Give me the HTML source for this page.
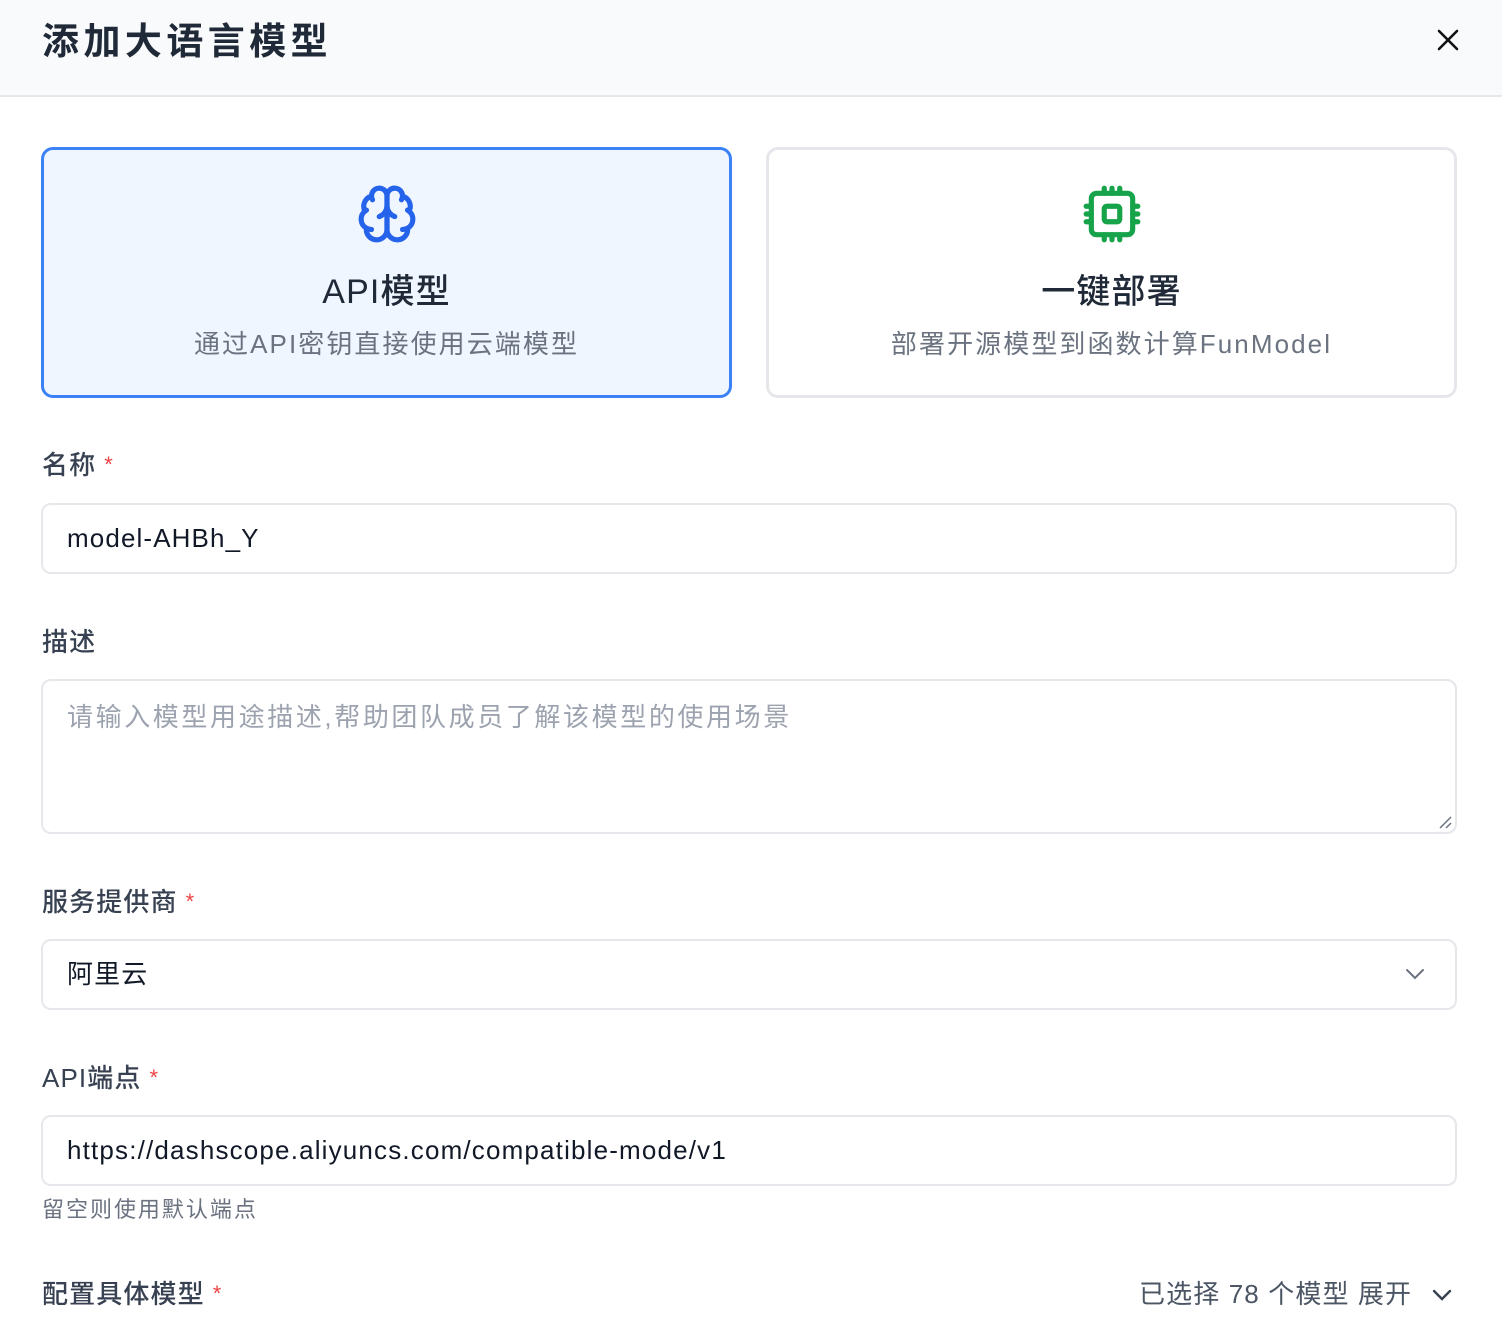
<!DOCTYPE html>
<html><head><meta charset="utf-8">
<style>
*{box-sizing:border-box;margin:0;padding:0}
body{width:1502px;height:1340px;background:#fff;font-family:"Liberation Sans","Noto Sans CJK SC",sans-serif;color:#111827;overflow:hidden;position:relative;letter-spacing:0.07em}
.hdr{position:absolute;left:0;top:0;width:1502px;height:97px;background:#f9fafb;border-bottom:2px solid #e5e7eb}
.hdr h1{position:absolute;left:42px;top:16px;font-size:37px;font-weight:700;line-height:52px;color:#1f2937;letter-spacing:0.12em}
.close{position:absolute;left:1436px;top:28px}
.card{position:absolute;top:147px;width:691px;height:251px;border-radius:12px;text-align:center}
.c1{left:41px;border:3px solid #3b82f6;background:#eff6ff}
.c2{left:766px;border:3px solid #e5e7eb;background:#fff}
.card svg{position:absolute;left:50%;margin-left:-31px;top:33px}
.card .t{position:absolute;left:0;right:0;top:120px;font-size:34px;font-weight:500;line-height:44px;color:#1f2937}
.card .s{position:absolute;left:0;right:0;top:176px;font-size:26px;line-height:36px;color:#6b7280;letter-spacing:0.08em}
.lbl{position:absolute;left:42px;font-size:26px;font-weight:500;line-height:36px;color:#374151}
.lbl b{color:#ef4444;font-weight:400;margin-left:8px;font-size:22px;vertical-align:top}
.inp{position:absolute;left:41px;width:1416px;height:71px;border:2px solid #e5e7eb;border-radius:10px;font-size:26px;line-height:67px;padding-left:24px;color:#111827}
.hint{position:absolute;left:42px;top:1195px;font-size:22px;line-height:30px;color:#6b7280;letter-spacing:0.09em}
</style></head><body>
<div class="hdr"><h1>添加大语言模型</h1>
<svg class="close" width="24" height="24" viewBox="0 0 24 24" fill="none" stroke="#111" stroke-width="2.6" stroke-linecap="round"><path d="M3 3L21 21M21 3L3 21"/></svg></div>

<div class="card c1">
<svg width="62" height="62" viewBox="0 0 24 24" fill="none" stroke="#2563eb" stroke-width="2" stroke-linecap="round" stroke-linejoin="round"><path d="M12 5a3 3 0 1 0-5.997.125 4 4 0 0 0-2.526 5.77 4 4 0 0 0 .556 6.588A4 4 0 1 0 12 18Z"/><path d="M12 5a3 3 0 1 1 5.997.125 4 4 0 0 1 2.526 5.77 4 4 0 0 1-.556 6.588A4 4 0 1 1 12 18Z"/><path d="M15 13a4.5 4.5 0 0 1-3-4 4.5 4.5 0 0 1-3 4"/><path d="M17.599 6.5a3 3 0 0 0 .399-1.375"/><path d="M6.003 5.125A3 3 0 0 0 6.401 6.5"/><path d="M3.477 10.896a4 4 0 0 1 .585-.396"/><path d="M19.938 10.5a4 4 0 0 1 .585.396"/><path d="M6 18a4 4 0 0 1-1.967-.516"/><path d="M19.967 17.484A4 4 0 0 1 18 18"/></svg>
<div class="t">API模型</div><div class="s">通过API密钥直接使用云端模型</div></div>

<div class="card c2">
<svg width="62" height="62" viewBox="0 0 24 24" fill="none" stroke="#16a34a" stroke-width="2" stroke-linecap="round" stroke-linejoin="round"><rect x="4" y="4" width="16" height="16" rx="2"/><rect x="9" y="9" width="6" height="6" rx="1"/><path d="M15 2v2M15 20v2M2 15h2M2 9h2M20 15h2M20 9h2M9 2v2M9 20v2M12 2v2M12 20v2M2 12h2M20 12h2"/></svg>
<div class="t">一键部署</div><div class="s">部署开源模型到函数计算FunModel</div></div>

<div class="lbl" style="top:447px">名称<b>*</b></div>
<div class="inp" style="top:503px">model-AHBh_Y</div>

<div class="lbl" style="top:624px">描述</div>
<div class="inp" style="top:679px;height:155px;line-height:36px;padding-top:18px;color:#9ca3af;letter-spacing:0.1em">请输入模型用途描述,帮助团队成员了解该模型的使用场景
<svg style="position:absolute;right:3px;bottom:3px" width="14" height="14" viewBox="0 0 14 14" stroke="#6b7280" stroke-width="1.5"><path d="M13 2L2 13M13 8L8 13"/></svg></div>

<div class="lbl" style="top:884px">服务提供商<b>*</b></div>
<div class="inp" style="top:939px">阿里云
<svg style="position:absolute;right:30px;top:26px" width="20" height="14" viewBox="0 0 20 14" fill="none" stroke="#6b7280" stroke-width="2" stroke-linecap="round"><path d="M2 3l8 8 8-8"/></svg></div>

<div class="lbl" style="top:1060px">API端点<b>*</b></div>
<div class="inp" style="top:1115px;letter-spacing:0.045em">https://dashscope.aliyuncs.com/compatible-mode/v1</div>
<div class="hint">留空则使用默认端点</div>

<div class="lbl" style="top:1276px">配置具体模型<b>*</b></div>
<div style="position:absolute;left:1139px;top:1276px;font-size:26px;line-height:36px;color:#4b5563">已选择 78 个模型 展开</div>
<svg style="position:absolute;left:1432px;top:1288px" width="20" height="14" viewBox="0 0 20 14" fill="none" stroke="#374151" stroke-width="2.4" stroke-linecap="round"><path d="M2 3l8 8 8-8"/></svg>
</body></html>
